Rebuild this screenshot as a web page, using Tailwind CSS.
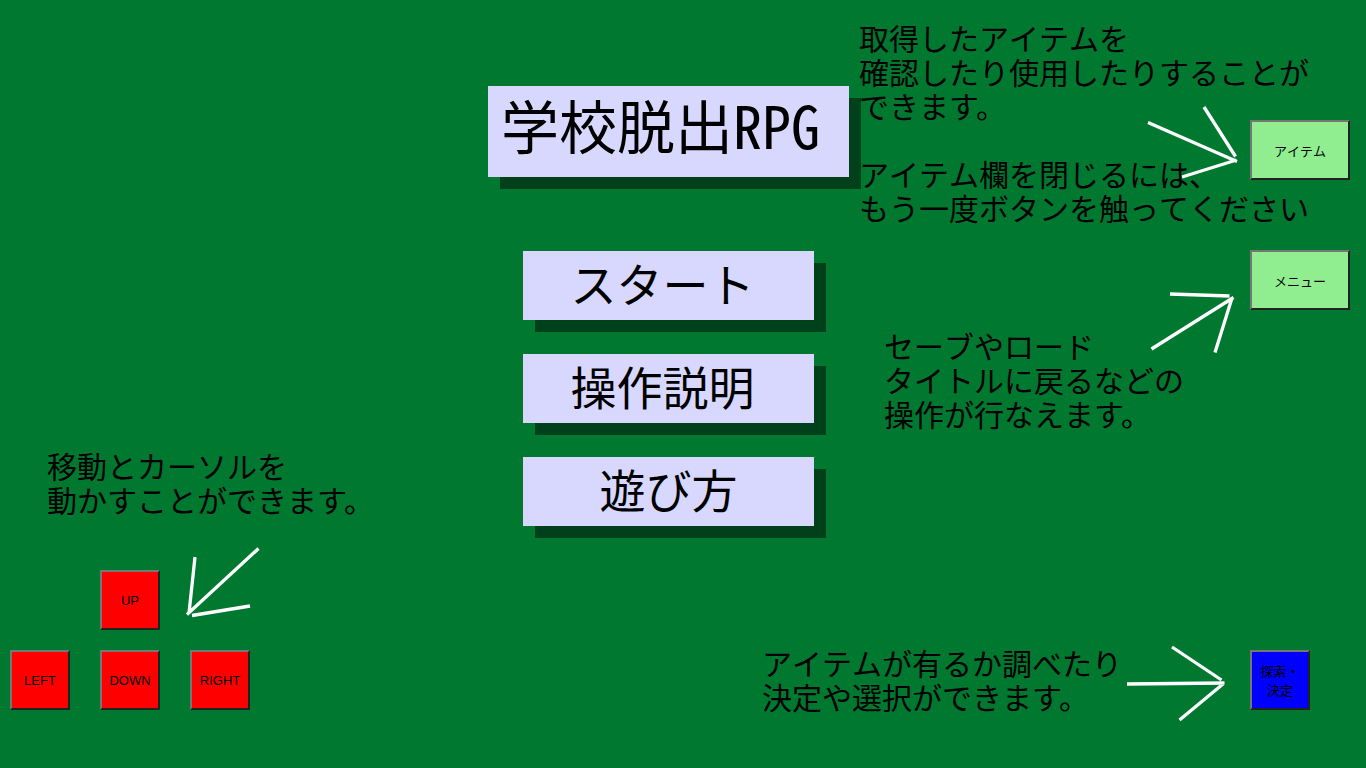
<!DOCTYPE html>
<html lang="ja">
<head>
<meta charset="utf-8">
<meta name="viewport" content="width=device-width, initial-scale=1">
<title>学校脱出RPG</title>
<script src="https://cdn.jsdelivr.net/npm/@tailwindcss/browser@4"></script>
</head>
<body class="bg-[#007830] text-black font-['Noto_Sans_CJK_JP',sans-serif] [font-kerning:none]">
<main class="grid min-h-screen grid-cols-[1fr_auto_auto] grid-rows-[1fr_auto] overflow-hidden">

  <!-- Movement help and direction pad -->
  <section class="row-span-2 flex flex-col justify-end pb-[58px]">
    <p class="mb-[54px] ml-[47px] text-[30px] leading-[34px] whitespace-nowrap">移動とカーソルを<br>動かすことが<span class="[font-kerning:normal]">できます。</span></p>
    <div class="relative ml-2.5 grid w-max grid-cols-[60px_60px_60px] gap-x-[30px] gap-y-5 font-['Liberation_Sans',sans-serif] text-[13px]">
      <button type="button" class="col-start-2 size-[60px] border-2 border-t-[#767676] border-r-[#212121] border-b-[#212121] border-l-[#767676] bg-[#ff0000] pt-0.5">UP</button>
      <button type="button" class="col-start-1 size-[60px] border-2 border-t-[#767676] border-r-[#212121] border-b-[#212121] border-l-[#767676] bg-[#ff0000] pt-0.5">LEFT</button>
      <button type="button" class="size-[60px] border-2 border-t-[#767676] border-r-[#212121] border-b-[#212121] border-l-[#767676] bg-[#ff0000] pt-0.5">DOWN</button>
      <button type="button" class="size-[60px] border-2 border-t-[#767676] border-r-[#212121] border-b-[#212121] border-l-[#767676] bg-[#ff0000] pt-0.5">RIGHT</button>
      <svg class="pointer-events-none absolute -top-[25px] left-[174px] h-[74px] w-[80px]" viewBox="184 545 80 74" stroke="#fff" stroke-width="3.300" aria-hidden="true"><path d="M258.500 548.500L187 614.500M195 557L189 613M250 606L192 615.500" fill="none"/></svg>
    </div>
  </section>

  <!-- Title and main menu -->
  <section class="flex flex-col items-center pt-[86px]">
    <h1 class="w-[361px] bg-[#d8d8ff] pb-[15px] pl-[13px] font-['Noto_Sans_Mono_CJK_JP','Noto_Sans_CJK_JP',monospace] text-[58px] leading-[76px] whitespace-nowrap shadow-[12px_12px_0_#00401a]">学校脱出RPG</h1>
    <nav class="mt-[74px] flex flex-col gap-[34px] text-[46px] leading-[63px]">
      <button type="button" class="h-[69px] w-[291px] bg-[#d8d8ff] pr-3 pb-1.5 shadow-[12px_12px_0_#00401a]">スタート</button>
      <button type="button" class="h-[69px] w-[291px] bg-[#d8d8ff] pr-3 pb-1.5 shadow-[12px_12px_0_#00401a]">操作説明</button>
      <button type="button" class="h-[69px] w-[291px] bg-[#d8d8ff] pb-1.5 shadow-[12px_12px_0_#00401a]">遊び方</button>
    </nav>
  </section>

  <!-- Item and menu buttons with their help -->
  <section class="relative ml-2.5 w-[507px] text-[30px] leading-[34px] whitespace-nowrap">
    <div class="grid items-start">
      <svg class="col-start-1 row-start-1 mt-[102px] mr-[124px] h-[84px] w-[98px] justify-self-end" viewBox="1144 102 98 84" stroke="#fff" stroke-width="3.300" aria-hidden="true"><path d="M1148 122.500L1237 161.500M1204 107L1235.500 156.500M1182 177L1236.500 160" fill="none"/></svg>
      <p class="col-start-1 row-start-1 mt-5">取得したアイテムを<br>確認したり使用したりすることが<br><span class="[font-kerning:normal]">できます。</span><br><br>アイテム欄を閉じるに<span class="[font-kerning:normal]">は、</span><br>もう一度ボタンを触ってください</p>
      <button type="button" class="col-start-1 row-start-1 mt-[120px] mr-4 h-[60px] w-[100px] justify-self-end border-2 border-t-[#767676] border-r-[#212121] border-b-[#212121] border-l-[#767676] bg-[#90ee90] pt-0.5 text-[13px] leading-5">アイテム</button>
    </div>
    <div class="grid items-start">
      <svg class="col-start-1 row-start-1 mt-[66px] mr-[128px] h-[66px] w-[90px] justify-self-end" viewBox="1148 290 90 66" stroke="#fff" stroke-width="3.300" aria-hidden="true"><path d="M1170 294L1229.500 296M1151.500 349L1233.500 297.500M1215 352.500L1232 298" fill="none"/></svg>
      <p class="col-start-1 row-start-1 mt-[104px] ml-[25px]">セーブやロード<br>タイトルに戻るなどの<br>操作が行なえ<span class="[font-kerning:normal]">ます。</span></p>
      <button type="button" class="col-start-1 row-start-1 mt-[26px] mr-4 h-[60px] w-[100px] justify-self-end border-2 border-t-[#767676] border-r-[#212121] border-b-[#212121] border-l-[#767676] bg-[#90ee90] pt-0.5 text-[13px] leading-5">メニュー</button>
    </div>
  </section>

  <!-- Search / confirm button with its help -->
  <section class="col-span-2 col-start-2 flex items-center justify-end pr-14 pb-12">
    <p class="pb-[3px] text-[30px] leading-[34px] whitespace-nowrap">アイテムが有るか調べたり<br>決定や選択が<span class="[font-kerning:normal]">できます。</span></p>
    <svg class="h-20 w-32 shrink-0" viewBox="1122 640 128 80" overflow="visible" stroke="#fff" stroke-width="3.300" aria-hidden="true"><path d="M1127 684L1224.500 683M1172 647L1221.500 680M1179.500 720L1223 684" fill="none"/></svg>
    <button type="button" class="size-[60px] shrink-0 border-2 border-t-[#767676] border-r-[#212121] border-b-[#212121] border-l-[#767676] bg-[#0000ff] text-[13px] leading-[19px]">探索・<br>決定</button>
  </section>
</main>
</body>
</html>
